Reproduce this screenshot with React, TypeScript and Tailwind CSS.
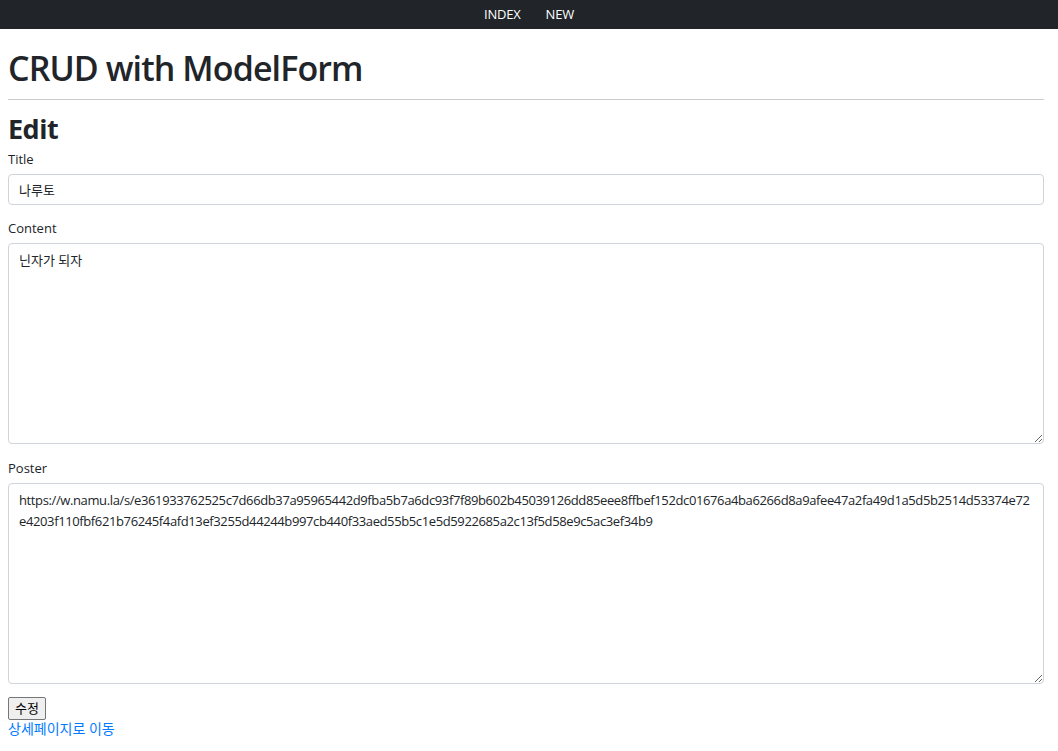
import React from 'react';

const poster =
  'https://w.namu.la/s/e361933762525c7d66db37a95965442d9fba5b7a6dc93f7f89b602b45039126dd85eee8ffbef152dc01676a4ba6266d8a9afee47a2fa49d1a5d5b2514d53374e72e4203f110fbf621b76245f4afd13ef3255d44244b997cb440f33aed55b5c1e5d5922685a2c13f5d58e9c5ac3ef34b9';

const font = { fontFamily: '"Open Sans", "Noto Sans CJK KR", sans-serif' };

export default function App() {
  return (
    <div className="min-h-screen bg-white text-[#212529]" style={font}>
      {/* Top nav */}
      <nav className="h-[29px] bg-[#212529] flex items-center justify-center gap-[25px] text-[13px] tracking-[-0.2px] text-white">
        <a href="#">INDEX</a>
        <a href="#">NEW</a>
      </nav>

      <div className="pl-2 pr-[14px]">
        <h1 className="mt-[17px] text-[34px] leading-[44px] font-semibold tracking-[-0.9px]">CRUD with ModelForm</h1>
        <hr className="mt-[9px] border-t border-[#cccccc]" />

        <h2 className="mt-[12px] text-[27px] leading-[34px] font-bold tracking-[-0.5px]">Edit</h2>

        <form className="mt-[3px]">
          <label className="block text-[13px] leading-[20px]">Title</label>
          <input
            type="text"
            defaultValue="나루토"
            className="mt-[5px] block w-full h-[31px] px-[10px] text-[13px] border border-[#ced4da] rounded-[4px] outline-none"
          />

          <label className="block mt-[13px] text-[13px] leading-[20px]">Content</label>
          <textarea
            defaultValue="닌자가 되자"
            className="mt-[5px] block w-full h-[201px] px-[10px] py-[6px] text-[13px] leading-[21px] border border-[#ced4da] rounded-[4px] outline-none"
          />

          <label className="block mt-[14px] text-[13px] leading-[20px]">Poster</label>
          <textarea
            defaultValue={poster}
            className="mt-[5px] block w-full h-[201px] px-[10px] py-[6px] text-[13px] leading-[21px] tracking-[-0.38px] border border-[#ced4da] rounded-[4px] outline-none"
          />

          <button
            type="button"
            className="mt-[13px] block h-[23px] px-[6px] text-[13px] text-black bg-[#efefef] border border-[#767676] rounded-[2px]"
          >
            수정
          </button>
        </form>
        <a href="#" className="block text-[14px] leading-[18px] text-[#007bff]">
          상세페이지로 이동
        </a>
      </div>
    </div>
  );
}
